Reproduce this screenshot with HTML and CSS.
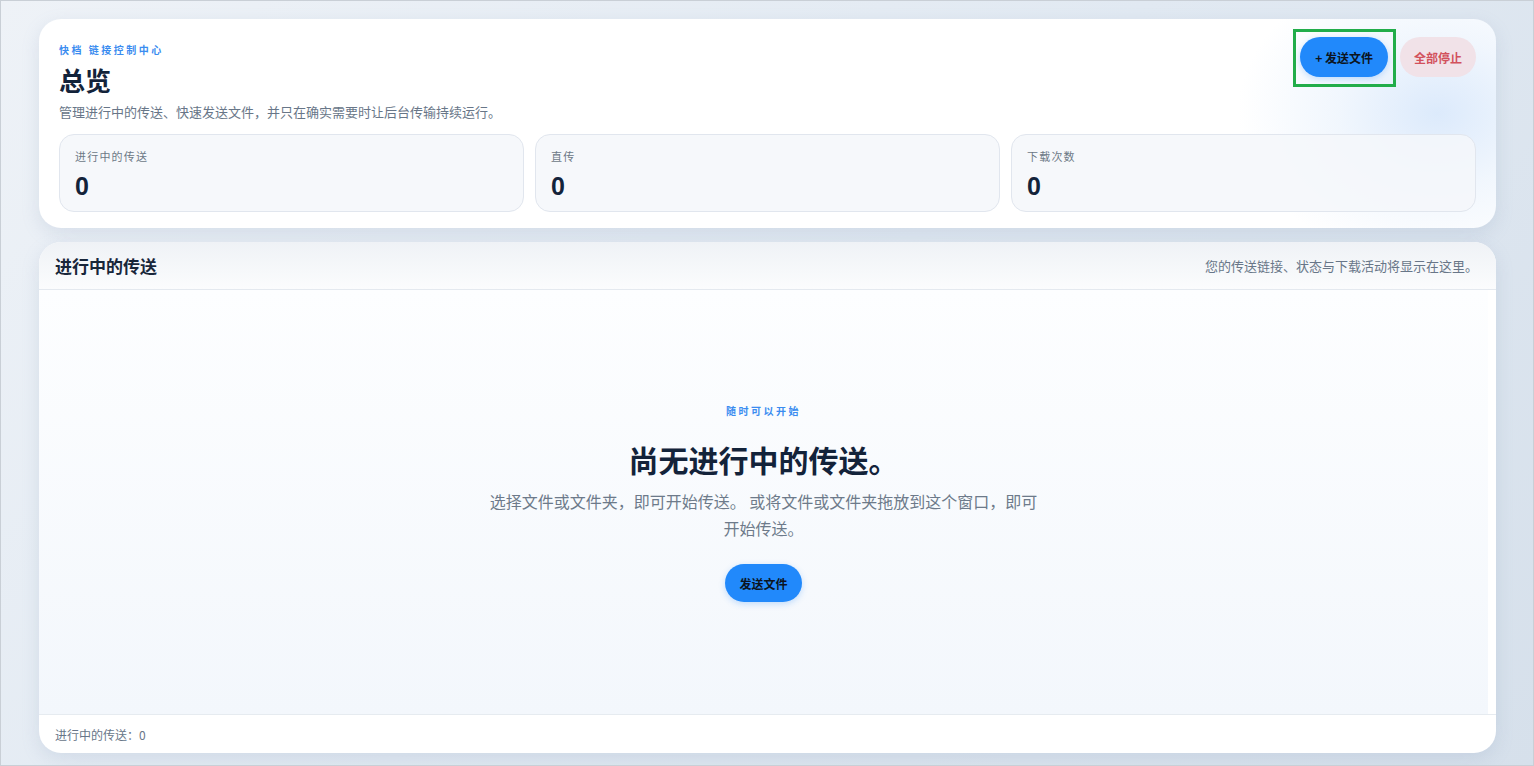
FILE: index.html
```html
<!DOCTYPE html>
<html lang="zh-CN">
<head>
    <meta charset="UTF-8">
    <meta name="viewport" content="width=device-width, initial-scale=1.0">
    <title>快档 链接控制中心</title>
    <link rel="stylesheet" href="styles.css">
</head>
<body>

    <div class="page">
        <section class="overview">
            <div class="overview-head">
                <div>
                    <div class="eyebrow">快档 链接控制中心</div>
                    <h1>总览</h1>
                    <p class="subtitle">管理进行中的传送、快速发送文件，并只在确实需要时让后台传输持续运行。</p>
                </div>
                <div class="actions">
                    <button class="btn btn-primary btn-marked">+ 发送文件</button>
                    <button class="btn btn-stop">全部停止</button>
                </div>
            </div>

            <div class="stats">
                <div class="stat">
                    <div class="stat-label">进行中的传送</div>
                    <div class="stat-value">0</div>
                </div>
                <div class="stat">
                    <div class="stat-label">直传</div>
                    <div class="stat-value">0</div>
                </div>
                <div class="stat">
                    <div class="stat-label">下载次数</div>
                    <div class="stat-value">0</div>
                </div>
            </div>
        </section>

        <section class="transfers">
            <div class="transfers-head">
                <h2>进行中的传送</h2>
                <span class="hint">您的传送链接、状态与下载活动将显示在这里。</span>
            </div>

            <div class="transfers-body">
                <div class="empty">
                    <div class="eyebrow eyebrow-center">随时可以开始</div>
                    <h3>尚无进行中的传送。</h3>
                    <p>选择文件或文件夹，即可开始传送。 或将文件或文件夹拖放到这个窗口，即可开始传送。</p>
                    <button class="btn btn-primary btn-small">发送文件</button>
                </div>
            </div>

            <div class="transfers-foot">进行中的传送：0</div>
        </section>
    </div>

</body>
</html>
```

FILE: styles.css
```css
html, body {
    height: 100%;
}
body {
    margin: 0;
    font-family: "Noto Sans CJK SC", "Noto Sans", sans-serif;
    color: #14243a;
    background: linear-gradient(135deg, #eef2f7 0%, #e1e9f2 50%, #d6e0eb 100%);
    border: 1px solid #c9cfd6;
    box-sizing: border-box;
}
.page {
    height: 100%;
    box-sizing: border-box;
    padding: 18px 37px 12px 38px;
    display: flex;
    flex-direction: column;
    gap: 14px;
}

/* overview card */
.overview {
    background:
        radial-gradient(ellipse 200px 150px at 96% 45%, rgba(205, 225, 250, 0.7) 0, rgba(220, 234, 251, 0.4) 50%, rgba(255, 255, 255, 0) 100%),
        #ffffff;
    border-radius: 22px;
    padding: 24px 20px 16px 20px;
    box-shadow: 0 6px 18px rgba(120, 145, 175, 0.18);
}
.overview-head {
    display: flex;
    justify-content: space-between;
    align-items: flex-start;
}
.eyebrow {
    font-size: 10px;
    line-height: 14px;
    font-weight: 700;
    letter-spacing: 2.5px;
    color: #3a8cf0;
}
h1 {
    margin: 6px 0 0;
    font-size: 26px;
    line-height: 34px;
    font-weight: 700;
    color: #13233a;
}
.subtitle {
    margin: 6px 0 0;
    font-size: 13px;
    line-height: 18px;
    color: #687688;
}
.actions {
    display: flex;
    gap: 12px;
    margin-top: -6px;
}
.btn {
    font-family: inherit;
    border: none;
    border-radius: 999px;
    font-size: 12px;
    font-weight: 700;
    cursor: pointer;
}
.btn-primary {
    background-color: #2189fb;
    color: #0c1420;
    height: 40px;
    padding: 0 15px;
    box-shadow: 0 2px 6px rgba(33, 137, 251, 0.25);
}
.btn-stop {
    background-color: #f1e2e8;
    color: #d2515c;
    height: 40px;
    padding: 0 14px;
}
.btn-marked {
    position: relative;
}
.btn-marked::after {
    content: "";
    position: absolute;
    left: -7px;
    right: -8px;
    top: -8px;
    bottom: -10px;
    border: 3px solid #22ad4a;
}

.stats {
    display: grid;
    grid-template-columns: repeat(3, 1fr);
    gap: 11px;
    margin-top: 13px;
}
.stat {
    background-color: rgba(245, 247, 250, 0.85);
    border: 1px solid #e1e6ee;
    border-radius: 15px;
    padding: 13px 15px 10px;
}
.stat-label {
    font-size: 11px;
    line-height: 16px;
    letter-spacing: 1.2px;
    color: #6d7886;
}
.stat-value {
    margin-top: 7px;
    font-family: "Liberation Sans", Arial, sans-serif;
    font-size: 25px;
    line-height: 30px;
    font-weight: 700;
    color: #13233a;
}

/* transfers card */
.transfers {
    flex: 1;
    display: flex;
    flex-direction: column;
    background-color: #ffffff;
    border-radius: 22px;
    overflow: hidden;
    box-shadow: 0 6px 18px rgba(120, 145, 175, 0.18);
}
.transfers-head {
    height: 47px;
    flex-shrink: 0;
    display: flex;
    align-items: center;
    justify-content: space-between;
    padding: 0 18px 0 16px;
    background: linear-gradient(180deg, #eff2f6 0%, #fbfcfd 100%);
    border-bottom: 1px solid #e4e9ef;
}
h2 {
    margin: 0;
    font-size: 17px;
    font-weight: 700;
    color: #18263a;
}
.hint {
    font-size: 13px;
    color: #687688;
}
.transfers-body {
    flex: 1;
    display: flex;
    align-items: center;
    justify-content: center;
    margin-right: 8px;
    background: linear-gradient(180deg, #fdfeff 0%, #f3f7fc 100%);
}
.empty {
    text-align: center;
    max-width: 560px;
    margin-top: 2px;
}
.eyebrow-center {
    letter-spacing: 2.5px;
}
h3 {
    margin: 21px 0 0;
    font-size: 30px;
    line-height: 40px;
    font-weight: 700;
    color: #13233a;
}
.empty p {
    margin: 9px 0 0;
    font-size: 16px;
    line-height: 27px;
    color: #6d7a8a;
}
.btn-small {
    height: 38px;
    padding: 0 14px;
    margin-top: 22px;
}
.transfers-foot {
    height: 38px;
    flex-shrink: 0;
    display: flex;
    align-items: center;
    padding: 0 16px;
    border-top: 1px solid #e6ebf0;
    font-size: 12px;
    color: #687688;
}
```
